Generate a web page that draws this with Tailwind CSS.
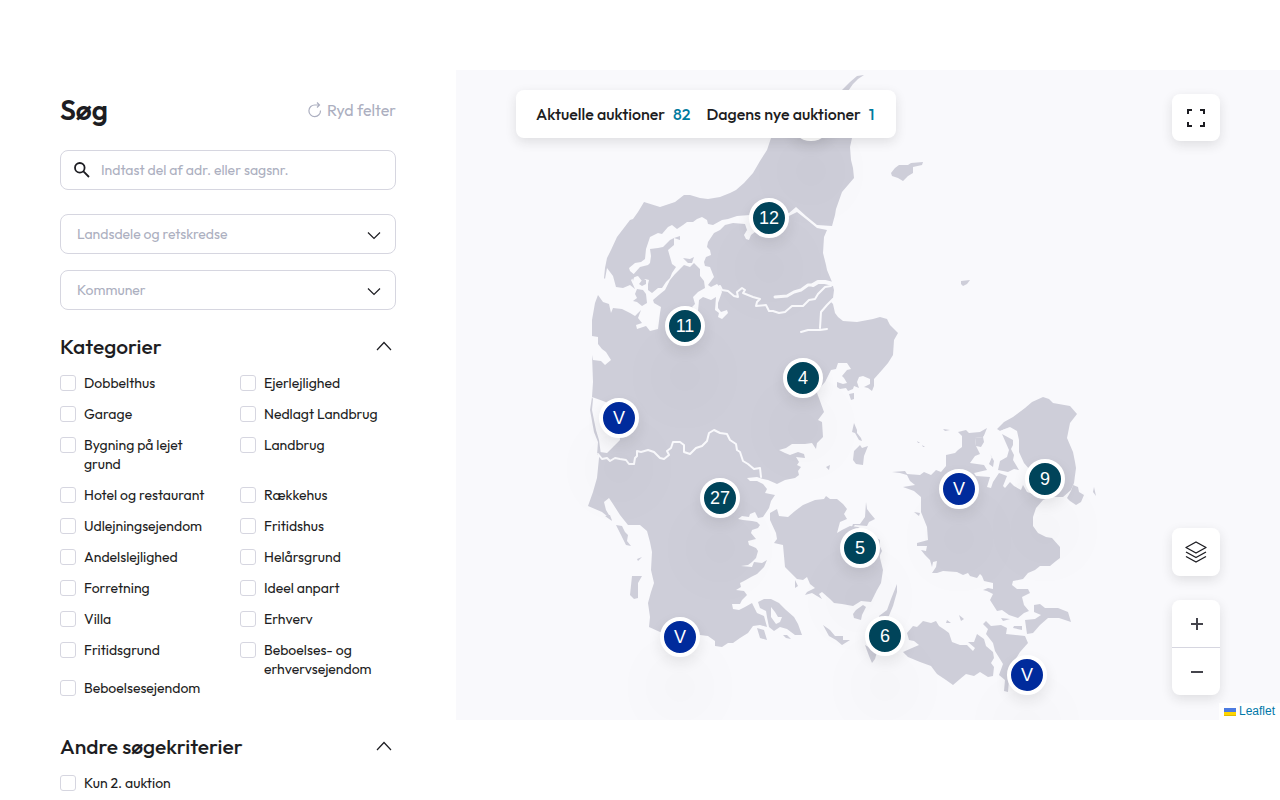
<!doctype html>
<html lang="da">
<head>
<meta charset="UTF-8">
<meta name="viewport" content="width=device-width, initial-scale=1">
<title>Søg</title>
<script src="https://cdn.jsdelivr.net/npm/@tailwindcss/browser@4"></script>
</head>
<body class="bg-white font-[Outfit,Lato,sans-serif] text-[#1d1d22]">
	<main class="flex h-screen items-start overflow-hidden pt-[70px]">

		<!-- Search form -->
		<form class="w-[456px] shrink-0 px-[60px] pt-5">
			<div class="flex h-10 items-center justify-between">
				<h1 class="text-[28px] font-semibold leading-10">Søg</h1>
				<button type="reset" class="flex items-center gap-1 text-base text-[#acafc0]">
					<svg class="h-4 w-4" viewBox="0 0 16 16" fill="none" stroke="currentColor" stroke-width="1.2"><path d="M13.500 8.500A5.800 5.800 0 1 1 8 3h4.500M10 .5L12.500 3 10 5.500"/></svg>
					Ryd felter
				</button>
			</div>

			<div class="relative mt-5">
				<svg class="absolute left-3 top-2.5 h-5 w-5" viewBox="0 0 20 20" fill="none" stroke="currentColor" stroke-width="1.8"><circle cx="7.800" cy="7.800" r="4.800"/><path d="M11.200 11.200l5.800 5.800"/></svg>
				<input type="text" aria-label="Søg adresse eller sagsnummer" placeholder="Indtast del af adr. eller sagsnr." class="block h-10 w-full rounded-lg border border-[#d6d6e0] pl-10 pr-4 text-sm placeholder:text-[#acafc0]">
			</div>
			<div class="relative mt-6">
				<select aria-label="Landsdele og retskredse" class="block h-10 w-full appearance-none rounded-lg border border-[#d6d6e0] bg-white px-4 text-sm text-[#acafc0]"><option>Landsdele og retskredse</option></select>
				<svg class="pointer-events-none absolute right-3.5 top-3 h-4 w-4" viewBox="0 0 16 16" fill="none" stroke="currentColor" stroke-width="1.2"><path d="M2 6.500l6 6 6-6"/></svg>
			</div>
			<div class="relative mt-4">
				<select aria-label="Kommuner" class="block h-10 w-full appearance-none rounded-lg border border-[#d6d6e0] bg-white px-4 text-sm text-[#acafc0]"><option>Kommuner</option></select>
				<svg class="pointer-events-none absolute right-3.5 top-3 h-4 w-4" viewBox="0 0 16 16" fill="none" stroke="currentColor" stroke-width="1.2"><path d="M2 6.500l6 6 6-6"/></svg>
			</div>

			<div class="mt-6 flex h-6 items-center justify-between pr-1">
				<h2 class="text-[21px] font-medium leading-[22px]">Kategorier</h2>
				<button type="button" aria-label="Fold kategorier sammen"><svg class="h-4 w-4" viewBox="0 0 16 16" fill="none" stroke="currentColor" stroke-width="1.2"><path d="M1 12l7-7.500 7 7.500"/></svg></button>
			</div>
			<div class="mt-4 grid grid-cols-[148px_148px] gap-x-8 gap-y-3 text-sm leading-[19px]">
				<label class="flex items-start gap-2"><input type="checkbox" class="mt-px size-4 shrink-0 appearance-none rounded-[3px] border border-[#d6d6e0]">Dobbelthus</label>
				<label class="flex items-start gap-2"><input type="checkbox" class="mt-px size-4 shrink-0 appearance-none rounded-[3px] border border-[#d6d6e0]">Ejerlejlighed</label>
				<label class="flex items-start gap-2"><input type="checkbox" class="mt-px size-4 shrink-0 appearance-none rounded-[3px] border border-[#d6d6e0]">Garage</label>
				<label class="flex items-start gap-2"><input type="checkbox" class="mt-px size-4 shrink-0 appearance-none rounded-[3px] border border-[#d6d6e0]">Nedlagt Landbrug</label>
				<label class="flex items-start gap-2"><input type="checkbox" class="mt-px size-4 shrink-0 appearance-none rounded-[3px] border border-[#d6d6e0]"><span>Bygning på lejet<br>grund</span></label>
				<label class="flex items-start gap-2"><input type="checkbox" class="mt-px size-4 shrink-0 appearance-none rounded-[3px] border border-[#d6d6e0]">Landbrug</label>
				<label class="flex items-start gap-2"><input type="checkbox" class="mt-px size-4 shrink-0 appearance-none rounded-[3px] border border-[#d6d6e0]">Hotel og restaurant</label>
				<label class="flex items-start gap-2"><input type="checkbox" class="mt-px size-4 shrink-0 appearance-none rounded-[3px] border border-[#d6d6e0]">Rækkehus</label>
				<label class="flex items-start gap-2"><input type="checkbox" class="mt-px size-4 shrink-0 appearance-none rounded-[3px] border border-[#d6d6e0]">Udlejningsejendom</label>
				<label class="flex items-start gap-2"><input type="checkbox" class="mt-px size-4 shrink-0 appearance-none rounded-[3px] border border-[#d6d6e0]">Fritidshus</label>
				<label class="flex items-start gap-2"><input type="checkbox" class="mt-px size-4 shrink-0 appearance-none rounded-[3px] border border-[#d6d6e0]">Andelslejlighed</label>
				<label class="flex items-start gap-2"><input type="checkbox" class="mt-px size-4 shrink-0 appearance-none rounded-[3px] border border-[#d6d6e0]">Helårsgrund</label>
				<label class="flex items-start gap-2"><input type="checkbox" class="mt-px size-4 shrink-0 appearance-none rounded-[3px] border border-[#d6d6e0]">Forretning</label>
				<label class="flex items-start gap-2"><input type="checkbox" class="mt-px size-4 shrink-0 appearance-none rounded-[3px] border border-[#d6d6e0]">Ideel anpart</label>
				<label class="flex items-start gap-2"><input type="checkbox" class="mt-px size-4 shrink-0 appearance-none rounded-[3px] border border-[#d6d6e0]">Villa</label>
				<label class="flex items-start gap-2"><input type="checkbox" class="mt-px size-4 shrink-0 appearance-none rounded-[3px] border border-[#d6d6e0]">Erhverv</label>
				<label class="flex items-start gap-2"><input type="checkbox" class="mt-px size-4 shrink-0 appearance-none rounded-[3px] border border-[#d6d6e0]">Fritidsgrund</label>
				<label class="-mb-3 flex items-start gap-2"><input type="checkbox" class="mt-px size-4 shrink-0 appearance-none rounded-[3px] border border-[#d6d6e0]"><span>Beboelses- og<br>erhvervsejendom</span></label>
				<label class="flex items-start gap-2"><input type="checkbox" class="mt-px size-4 shrink-0 appearance-none rounded-[3px] border border-[#d6d6e0]">Beboelsesejendom</label>
			</div>

			<div class="mt-9 flex h-6 items-center justify-between pr-1">
				<h2 class="text-[21px] font-medium leading-[22px]">Andre søgekriterier</h2>
				<button type="button" aria-label="Fold andre søgekriterier sammen"><svg class="h-4 w-4" viewBox="0 0 16 16" fill="none" stroke="currentColor" stroke-width="1.2"><path d="M1 12l7-7.500 7 7.500"/></svg></button>
			</div>
			<label class="mt-4 flex items-start gap-2 text-sm leading-[19px]"><input type="checkbox" class="mt-px size-4 shrink-0 appearance-none rounded-[3px] border border-[#d6d6e0]">Kun 2. auktion</label>
		</form>

		<!-- Map -->
		<section class="relative h-[650px] min-w-0 flex-1 overflow-hidden bg-[#f9f9fc]" aria-label="Kort">
			<div class="absolute left-1/2 top-0 h-[650px] w-[824px] -translate-x-1/2">
				<svg class="h-full w-full" viewBox="456 70 824 650" fill="#ceced9">
					<!-- Vendsyssel and Thy -->
					<path d="M864 75L857 76 850 82 842 90 812 110 790 118 775 130 771 138 767 150 760 161 753 173 744 183 736 190 730 193 720 197 708 199 700 198 690 195 684 195 675 202 660 207 644 202 638 212 633 219 630 220 617 237 611 250 607 258 605 268 604 278 605 279 607 268 613 276 616 287 623 288 630 285 635 289 631 280 636 276 630 271 629 268 635 263 641 262 645 259 646 249 650 237 658 233 662 234 668 227 672 225 677 229 683 225 687 222 693 222 697 219 702 217 707 220 708 224 713 225 722 220 728 219 737 216 750 215 789 213 796 207 806 216 817 225 832 226 835 215 836 209 842 192 854 178 853 168 851 160 850 147 852 138 855 122 848 105 846 94 853 84 858 79Z"/>
					<!-- Mors, Thyholm and Fur -->
					<path d="M650 249L658 248 663 247 670 240 674 238 674 245 668 250 670 257 672 264 676 267 672 273 670 278 666 282 662 288 658 288 652 293 648 290 648 284 649 280 645 279 642 281 638 276 634 277 633 281 632 276 640 267 648 265 650 263 651 256ZM637 289L643 290 646 294 647 303 642 306 637 302 633 301 637 298 635 294ZM643 279L646 280 646 284 642 286 639 284ZM683 258L690 259 694 257 692 263 688 263ZM674 238L680 236 680 240Z"/>
					<!-- Jutland -->
					<path d="M708 242L714 233 720 230 725 225 733 223 745 224 747 230 744 235 746 239 749 240 751 235 755 232 770 232 789 216 797 212 806 219 817 228 827 230 824 237 823 253 826 265 827 270 832 282 834 290 833 298 831 302 833 304 835 313 838 317 843 321 857 322 873 319 880 317 887 319 890 325 898 333 894 340 893 355 888 363 882 370 874 379 874 386 872 391 868 388 864 387 870 384 870 379 863 376 859 377 857 382 859 388 854 386 853 389 848 391 846 388 840 389 837 387 837 382 843 384 847 383 844 378 842 376 847 370 851 369 847 363 838 363 836 369 831 370 825 382 818 390 817 393 820 401 824 412 818 420 822 422 823 437 817 443 816 449 812 443 805 444 792 444 786 448 779 450 785 453 790 455 798 452 804 454 805 458 796 457 799 462 797 465 801 467 798 471 799 475 795 478 785 480 777 484 768 480 763 479 757 477 747 478 750 481 757 481 763 484 767 489 765 493 775 495 771 501 769 508 765 514 763 517 758 518 755 512 750 514 749 517 742 516 738 519 743 520 752 521 757 522 760 525 758 528 752 530 751 533 756 539 748 541 749 545 756 548 758 551 756 558 752 562 748 565 741 566 752 567 754 562 762 563 767 560 764 567 757 574 751 577 744 581 740 583 741 587 736 590 744 591 747 595 742 600 740 604 732 604 733 609 739 610 745 607 752 603 757 613 764 616 767 627 760 625 753 626 748 633 740 638 733 643 728 643 722 647 715 646 715 641 708 636 700 635 690 634 675 634 660 632 649 627 650 617 648 603 651 592 654 583 651 570 652 552 650 542 647 531 640 525 628 525 620 515 613 504 609 498 604 502 606 510 612 520 602 512 588 506 593 492 597 478 599 458 600 452 607 453 614 446 620 440 619 425 610 404 603 401 592 397 593 382 592 355 593 360 601 361 605 365 611 360 606 352 602 349 598 344 598 337 592 336 592 320 595 303 598 295 603 302 609 304 611 313 613 308 622 309 630 313 635 316 641 310 638 318 642 323 636 325 637 329 646 326 650 331 658 329 660 313 661 307 654 303 653 300 660 294 665 290 670 280 675 274 680 269 684 265 690 267 694 263 700 269 700 276 704 281 705 288 698 292 693 297 695 304 692 307 695 310 698 311 699 300 703 297 711 300 716 297 715 310 719 313 718 317 722 319 728 313 727 310 721 312 718 308 718 303 722 292 720 287 717 284 711 287 708 285 714 277 710 267 705 266 704 262 706 257 711 255 710 250 707 247Z"/>
					<path d="M592 397L590 410 594 432 598 442 597 455 601 455 599 440 596 430 592 410 593 399Z"/>
					<!-- fjords and region borders -->
					<g fill="none" stroke="#f9f9fc" stroke-linejoin="round" stroke-linecap="round">
						<path stroke-width="4" d="M833 284L825 282 818 282 813 285"/>
						<path stroke-width="3" d="M813 285L808 285 801 290 794 292 787 296 775 297"/>
						<path stroke-width="2" d="M831 286L825 287 818 294 815 299 809 300 803 306 792 306 785 312 779 313 773 311 769 311 766 305 756 306 757 302 760 299 753 297 748 295 743 293 745 290 742 288 737 292 738 297 734 296 728 291 722 290 720 286M833 299L827 305 821 312 820 328M827 329L820 330 808 330 801 332M598 454L602 459 607 458 610 461 615 458 620 459 626 460 629 464 634 464 635 458 637 456 637 451 641 452 648 450 654 452 660 458 664 459 669 455 667 451 671 448 673 442 680 442 684 445 684 452 690 454 696 448 702 446 707 441 709 433 714 430 720 433 727 434 730 440 736 444 737 450 740 452 743 461 748 464 754 469 760 468 761 477"/>
					</g>
					<!-- Als and the coast around it -->
					<path d="M758 602L764 599 771 599 779 603 786 610 794 617 798 624 802 635 795 635 787 629 780 627 774 631 769 627 767 617 766 611 760 608ZM757 628L764 630 767 640 760 638ZM783 635L787 635 791 639 786 638Z"/>
					<path fill="#f9f9fc" d="M771 607L775 612 778 617 782 617 780 622 776 624 771 617Z"/>
					<!-- Funen -->
					<path d="M770 520L770 513 777 509 779 516 788 517 795 511 803 505 815 500 824 499 826 496 830 499 837 499 843 504 847 509 844 514 847 519 840 522 837 533 842 530 850 526 858 527 880 540 880 558 883 570 881 583 877 590 871 602 861 601 853 606 842 604 834 603 830 599 822 592 819 594 822 599 812 593 805 595 807 592 815 588 810 584 807 577 803 580 797 579 785 567 783 545 774 543 777 539 776 533ZM866 502L867 509 870 513 875 519 869 522 867 526 855 525 851 529 853 524 860 524 865 517ZM795 580L798 586 795 588ZM878 542L882 551 880 555Z"/>
					<!-- islands south of Funen -->
					<path d="M856 610L863 605 866 607 862 615 861 620 854 618 853 614ZM897 584L897 592 893 606 888 618 880 620 879 616 887 610 891 599ZM865 645L877 652 875 659 872 663 869 656ZM823 625L830 630 835 636 843 636 843 640 850 640 842 645 836 640 829 636Z"/>
					<!-- Samsø, Læsø, Anholt and small islets -->
					<path d="M854 423L857 430 857 433 861 438 862 441 859 440 855 433 852 432ZM854 451L860 445 862 448 868 446 864 456 863 465 856 464 853 460ZM891 173L895 168 899 165 908 165 911 163 923 162 922 165 913 167 913 173 908 176 903 181 898 178 892 176ZM961 281L970 280 967 284 963 286 961 284ZM849 394L854 393 854 399 851 400ZM826 467L830 465 829 470ZM917 441L920 443 918 443ZM922 445L925 447 923 447ZM936 425L939 426ZM943 429L950 430 945 431ZM914 512L920 513 919 516ZM959 615L964 619 961 621ZM947 620L951 623 946 623Z"/>
					<!-- Fanø and Rømø -->
					<path d="M616 525L622 526 625 532 628 535 627 541 631 546 626 545 621 535ZM637 559L642 557 638 561ZM632 576L642 576 638 583 638 598 634 599 630 595ZM632 546L635 546ZM605 516L612 521 610 515Z"/>
					<!-- Zealand -->
					<path d="M997 429L1004 422 1013 417 1025 408 1032 402 1043 397 1049 399 1053 403 1070 406 1077 414 1070 423 1067 438 1073 452 1075 462 1076 468 1074 483 1071 490 1063 497 1051 497 1043 500 1036 508 1033 517 1033 526 1038 533 1046 537 1052 538 1060 547 1060 558 1056 561 1050 566 1040 566 1035 570 1028 573 1023 579 1013 581 1012 585 1017 589 1028 589 1030 593 1022 597 1024 605 1029 611 1024 613 1018 618 1009 615 1002 610 997 611 990 600 993 594 987 591 983 590 988 588 993 589 993 583 984 581 982 576 980 574 977 578 970 576 968 573 963 575 957 572 943 571 937 573 932 573 936 567 937 561 933 562 932 567 930 560 925 555 921 550 926 551 927 546 917 546 917 543 928 540 927 527 921 512 921 497 914 491 903 487 915 485 910 481 907 475 900 473 892 472 905 471 907 474 920 475 924 472 931 475 936 470 941 472 946 466 946 455 955 453 958 450 962 447 962 436 958 432 966 430 969 433 980 432 987 428 983 438 982 447 986 456 994 461 1001 450 1006 442 1002 431 1010 427 1000 431Z"/>
					<path fill="#f9f9fc" d="M983 437L990 429 1000 431 1010 427 1017 431 1019 440 1019 452 1024 463 1030 470 1035 478 1033 494 1027 492 1023 485 1021 490 1014 486 1010 482 1005 488 1003 486 1007 476 999 473 993 482 991 488 987 487 990 477 976 476 974 473 987 470 984 465 970 463 975 456 980 454 976 446 975 438Z"/>
					<path d="M983 437L975 438 976 446 981 447 984 442ZM1002 434L1013 440 1013 445 1011 449 1014 455 1013 460 1019 470 1014 469 1008 472 998 470 1000 461 1007 457 1009 450ZM990 454L994 461 993 467 989 464 992 457ZM1073 485L1078 487 1079 492 1084 495 1081 502 1076 505 1070 501 1067 498 1071 491ZM1094 487L1096 496 1093 492Z"/>
					<!-- Lolland, Falster and Møn -->
					<path d="M907 633L913 626 917 627 923 621 931 623 936 621 939 626 945 630 949 633 952 642 960 645 967 645 973 651 975 648 968 642 974 642 977 634 984 639 986 646 993 652 994 658 991 663 994 667 993 676 988 677 980 672 974 676 966 674 960 679 953 685 946 680 937 674 931 666 920 662 908 657 903 652 912 648 919 645 914 641 909 640ZM986 621L991 626 1001 625 1007 628 1006 634 1025 636 1028 643 1020 652 1015 660 1010 668 1008 692 1004 691 1005 680 999 675 1003 664 995 651 993 643 986 634 988 629 983 624ZM1025 620L1035 619 1041 615 1034 612 1034 605 1040 604 1045 608 1058 608 1068 612 1071 622 1059 618 1048 618 1040 625 1033 633 1027 634ZM1001 618L1010 619 1003 621ZM1014 626L1022 626 1022 630 1013 628Z"/>
				</svg>

				<!-- markers -->
				<div class="absolute left-[335px] top-[31px] size-10 rounded-full border-4 border-white bg-[#00445a] shadow-[0_6px_14px_rgba(29,29,34,0.09),0_50px_60px_10px_rgba(29,29,34,0.03)]"></div>
				<button type="button" class="absolute left-[293px] top-32 size-10 rounded-full border-4 border-white bg-[#00445a] font-[Liberation_Sans,sans-serif] text-lg leading-8 text-white shadow-[0_6px_14px_rgba(29,29,34,0.09),0_50px_60px_10px_rgba(29,29,34,0.03)]">12</button>
				<button type="button" class="absolute left-[209px] top-[236px] size-10 rounded-full border-4 border-white bg-[#00445a] font-[Liberation_Sans,sans-serif] text-lg leading-8 text-white shadow-[0_6px_14px_rgba(29,29,34,0.09),0_50px_60px_10px_rgba(29,29,34,0.03)]">11</button>
				<button type="button" class="absolute left-[327px] top-72 size-10 rounded-full border-4 border-white bg-[#00445a] font-[Liberation_Sans,sans-serif] text-lg leading-8 text-white shadow-[0_6px_14px_rgba(29,29,34,0.09),0_50px_60px_10px_rgba(29,29,34,0.03)]">4</button>
				<button type="button" class="absolute left-[143px] top-[328px] size-10 rounded-full border-4 border-white bg-[#002b9c] font-[Liberation_Sans,sans-serif] text-lg leading-8 text-white shadow-[0_6px_14px_rgba(29,29,34,0.09),0_50px_60px_10px_rgba(29,29,34,0.03)]">V</button>
				<button type="button" class="absolute left-[244px] top-[408px] size-10 rounded-full border-4 border-white bg-[#00445a] font-[Liberation_Sans,sans-serif] text-lg leading-8 text-white shadow-[0_6px_14px_rgba(29,29,34,0.09),0_50px_60px_10px_rgba(29,29,34,0.03)]">27</button>
				<button type="button" class="absolute left-[483px] top-[399px] size-10 rounded-full border-4 border-white bg-[#002b9c] font-[Liberation_Sans,sans-serif] text-lg leading-8 text-white shadow-[0_6px_14px_rgba(29,29,34,0.09),0_50px_60px_10px_rgba(29,29,34,0.03)]">V</button>
				<button type="button" class="absolute left-[569px] top-[389px] size-10 rounded-full border-4 border-white bg-[#00445a] font-[Liberation_Sans,sans-serif] text-lg leading-8 text-white shadow-[0_6px_14px_rgba(29,29,34,0.09),0_50px_60px_10px_rgba(29,29,34,0.03)]">9</button>
				<button type="button" class="absolute left-96 top-[458px] size-10 rounded-full border-4 border-white bg-[#00445a] font-[Liberation_Sans,sans-serif] text-lg leading-8 text-white shadow-[0_6px_14px_rgba(29,29,34,0.09),0_50px_60px_10px_rgba(29,29,34,0.03)]">5</button>
				<button type="button" class="absolute left-[204px] top-[547px] size-10 rounded-full border-4 border-white bg-[#002b9c] font-[Liberation_Sans,sans-serif] text-lg leading-8 text-white shadow-[0_6px_14px_rgba(29,29,34,0.09),0_50px_60px_10px_rgba(29,29,34,0.03)]">V</button>
				<button type="button" class="absolute left-[409px] top-[546px] size-10 rounded-full border-4 border-white bg-[#00445a] font-[Liberation_Sans,sans-serif] text-lg leading-8 text-white shadow-[0_6px_14px_rgba(29,29,34,0.09),0_50px_60px_10px_rgba(29,29,34,0.03)]">6</button>
				<button type="button" class="absolute left-[551px] top-[585px] size-10 rounded-full border-4 border-white bg-[#002b9c] font-[Liberation_Sans,sans-serif] text-lg leading-8 text-white shadow-[0_6px_14px_rgba(29,29,34,0.09),0_50px_60px_10px_rgba(29,29,34,0.03)]">V</button>
			</div>

			<!-- auction counts -->
			<div class="absolute left-[60px] top-5 flex h-12 w-[380px] items-center gap-4 whitespace-nowrap rounded-lg bg-white px-5 text-base font-medium shadow-[0_4px_12px_rgba(29,29,34,0.12)]">
				<p class="flex gap-2">Aktuelle auktioner <span class="text-[#007a9e]">82</span></p>
				<p class="flex gap-2">Dagens nye auktioner <span class="text-[#007a9e]">1</span></p>
			</div>

			<!-- map controls -->
			<button type="button" aria-label="Fuld skærm" class="absolute right-[60px] top-6 flex h-[47px] w-12 items-center justify-center rounded-lg bg-white shadow-[0_4px_12px_rgba(29,29,34,0.12)]">
				<svg class="h-[18px] w-[18px]" viewBox="0 0 18 18" fill="none" stroke="currentColor" stroke-width="2"><path d="M1 5V1h4M13 1h4v4M17 13v4h-4M5 17H1v-4"/></svg>
			</button>
			<div class="absolute bottom-[25px] right-[60px] flex w-12 flex-col gap-6">
				<button type="button" aria-label="Kortlag" class="flex h-12 items-center justify-center rounded-lg bg-white shadow-[0_4px_12px_rgba(29,29,34,0.12)]">
					<svg class="h-6 w-6" viewBox="0 0 24 24" fill="none" stroke="currentColor" stroke-width="1.4" stroke-linejoin="round"><path d="M12 2l10 5.500L12 13 2 7.500zM2 12l10 5.500L22 12M2 16.500L12 22l10-5.500"/></svg>
				</button>
				<div class="flex flex-col divide-y divide-[#d6d6e0] overflow-hidden rounded-lg bg-white shadow-[0_4px_12px_rgba(29,29,34,0.12)]">
					<button type="button" aria-label="Zoom ind" class="flex h-12 items-center justify-center pl-0.5"><svg class="h-3 w-3" viewBox="0 0 12 12" fill="none" stroke="#44444c" stroke-width="2"><path d="M6 0v12M0 6h12"/></svg></button>
					<button type="button" aria-label="Zoom ud" class="flex h-[47px] items-center justify-center pl-0.5"><svg class="h-3 w-3" viewBox="0 0 12 12" fill="none" stroke="#44444c" stroke-width="2"><path d="M0 6h12"/></svg></button>
				</div>
			</div>
			<a href="https://leafletjs.com" class="absolute bottom-0 right-0 flex items-center gap-[3px] bg-white/80 px-[5px] font-[Liberation_Sans,sans-serif] text-xs leading-[17px] text-[#0078a8]">
				<svg class="h-2 w-3" viewBox="0 0 12 8"><path fill="#4c7be1" d="M0 0h12v4H0z"/><path fill="#ffd500" d="M0 4h12v3H0z"/><path fill="#e0bc00" d="M0 7h12v1H0z"/></svg>
				Leaflet
			</a>
		</section>
	</main>
</body>
</html>
